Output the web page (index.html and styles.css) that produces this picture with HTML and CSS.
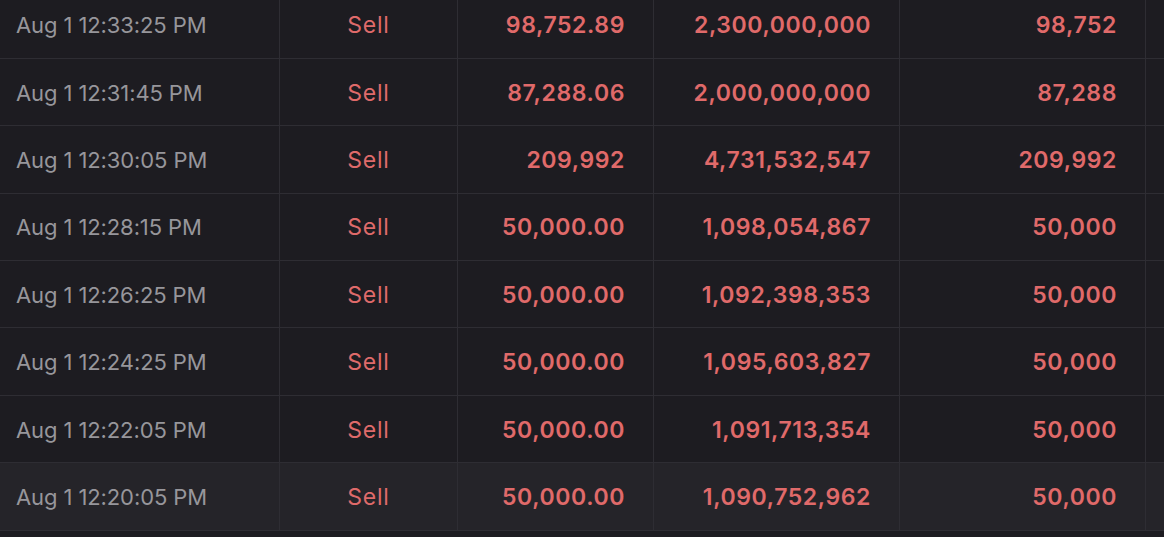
FILE: index.html
```html
<!DOCTYPE html>
<html lang="en">
<head>
    <meta charset="UTF-8">
    <meta name="viewport" content="width=device-width, initial-scale=1.0">
    <title>Trades</title>
    <link rel="stylesheet" href="styles.css">
</head>
<body>
    <div class="trades">
        <div class="row">
            <div class="cell time">Aug 1 12:33:25 PM</div>
            <div class="cell side">Sell</div>
            <div class="cell num">98,752.89</div>
            <div class="cell num">2,300,000,000</div>
            <div class="cell num">98,752</div>
            <div class="cell extra"></div>
        </div>
        <div class="row">
            <div class="cell time">Aug 1 12:31:45 PM</div>
            <div class="cell side">Sell</div>
            <div class="cell num">87,288.06</div>
            <div class="cell num">2,000,000,000</div>
            <div class="cell num">87,288</div>
            <div class="cell extra"></div>
        </div>
        <div class="row">
            <div class="cell time">Aug 1 12:30:05 PM</div>
            <div class="cell side">Sell</div>
            <div class="cell num">209,992</div>
            <div class="cell num">4,731,532,547</div>
            <div class="cell num">209,992</div>
            <div class="cell extra"></div>
        </div>
        <div class="row">
            <div class="cell time">Aug 1 12:28:15 PM</div>
            <div class="cell side">Sell</div>
            <div class="cell num">50,000.00</div>
            <div class="cell num">1,098,054,867</div>
            <div class="cell num">50,000</div>
            <div class="cell extra"></div>
        </div>
        <div class="row">
            <div class="cell time">Aug 1 12:26:25 PM</div>
            <div class="cell side">Sell</div>
            <div class="cell num">50,000.00</div>
            <div class="cell num">1,092,398,353</div>
            <div class="cell num">50,000</div>
            <div class="cell extra"></div>
        </div>
        <div class="row">
            <div class="cell time">Aug 1 12:24:25 PM</div>
            <div class="cell side">Sell</div>
            <div class="cell num">50,000.00</div>
            <div class="cell num">1,095,603,827</div>
            <div class="cell num">50,000</div>
            <div class="cell extra"></div>
        </div>
        <div class="row">
            <div class="cell time">Aug 1 12:22:05 PM</div>
            <div class="cell side">Sell</div>
            <div class="cell num">50,000.00</div>
            <div class="cell num">1,091,713,354</div>
            <div class="cell num">50,000</div>
            <div class="cell extra"></div>
        </div>
        <div class="row hover">
            <div class="cell time">Aug 1 12:20:05 PM</div>
            <div class="cell side">Sell</div>
            <div class="cell num">50,000.00</div>
            <div class="cell num">1,090,752,962</div>
            <div class="cell num">50,000</div>
            <div class="cell extra"></div>
        </div>
    </div>
</body>
</html>
```

FILE: styles.css
```css
/* Trade history table */
body {
    margin: 0;
    background-color: #1d1c21;
    font-family: Inter, "Liberation Sans", sans-serif;
    overflow: hidden;
}

.trades {
    margin-top: -8.5px; /* first row is cut off at the top */
    width: 1200px;
}

.row {
    display: grid;
    grid-template-columns: 280px 178px 196px 246px 246px 1fr;
    height: 67.4px;
    box-sizing: border-box;
    border-bottom: 1px solid #2e2d33;
}

.row.hover {
    background-color: #252429;
}

.cell {
    display: flex;
    align-items: center;
    border-right: 1px solid #2e2d33;
    font-size: 22px;
    padding-top: 1px;
}

.time {
    color: #97969b;
    padding-left: 16px;
    letter-spacing: -0.1px;
}

.side {
    justify-content: center;
    color: #df6a6a;
    font-size: 23px;
    letter-spacing: 0.8px;
}

.num {
    justify-content: flex-end;
    padding-right: 28px;
    color: #e06a6a;
    font-weight: 600;
    font-size: 23px;
    letter-spacing: 0.6px;
}

.extra {
    border-right: none;
}
```
